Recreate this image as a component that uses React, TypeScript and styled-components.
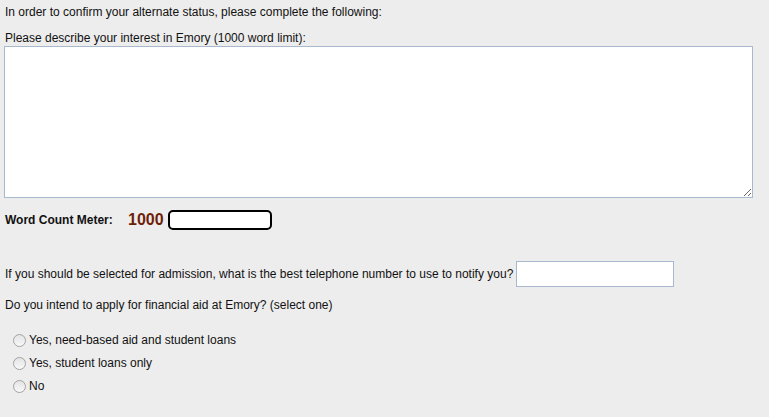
import { createGlobalStyle } from "styled-components";
import styled from "styled-components";

const GlobalStyle = createGlobalStyle`
  html, body {
    margin: 0;
    padding: 0;
    background: #ededed;
  }
  body {
    font-family: "Liberation Sans", Arial, sans-serif;
    font-size: 12px;
    color: #111;
  }
`;

const Page = styled.div`
  padding: 5px 4px 0 4px;
  display: flex;
  flex-direction: column;
`;

const Line = styled.div<{ $top?: number }>`
  line-height: 15px;
  padding-left: 1px;
  margin-top: ${(p) => p.$top ?? 0}px;
`;

const Essay = styled.textarea`
  box-sizing: border-box;
  width: 749px;
  height: 152px;
  margin: 0;
  border: 1px solid #a9b9cd;
  background: #fff;
  resize: both;
  font-family: inherit;
  font-size: 12px;
`;

const MeterRow = styled.div`
  display: flex;
  align-items: center;
  margin-top: 12px;
  height: 20px;
  padding-left: 1px;
`;

const MeterLabel = styled.span`
  font-weight: bold;
  width: 123px;
`;

const Count = styled.span`
  font-size: 16px;
  font-weight: bold;
  color: #6e1f0a;
  width: 40px;
`;

const Meter = styled.div`
  box-sizing: border-box;
  width: 104px;
  height: 20px;
  border: 2px solid #000;
  border-radius: 5px;
  background: #fff;
`;

const PhoneRow = styled.div`
  display: flex;
  align-items: center;
  margin-top: 31px;
  padding-left: 1px;
`;

const Phone = styled.input`
  box-sizing: border-box;
  width: 158px;
  height: 26px;
  margin: 0 0 0 3px;
  border: 1px solid #a9b9cd;
  background: #fff;
`;

const Options = styled.div`
  display: flex;
  flex-direction: column;
  gap: 8px;
  margin-top: 20px;
  padding-left: 9px;
`;

const Option = styled.label`
  display: flex;
  align-items: center;
  gap: 3px;
  line-height: 15px;
`;

const Radio = styled.span`
  box-sizing: border-box;
  width: 13px;
  height: 13px;
  border-radius: 50%;
  border: 1px solid #a3a3a3;
  background: linear-gradient(#e4e4e4, #f8f8f8);
`;

export default function App() {
  return (
    <>
      <GlobalStyle />
      <Page>
        <Line>In order to confirm your alternate status, please complete the following:</Line>
        <Line $top={11}>Please describe your interest in Emory (1000 word limit):</Line>
        <Essay />
        <MeterRow>
          <MeterLabel>Word Count Meter:</MeterLabel>
          <Count>1000</Count>
          <Meter />
        </MeterRow>
        <PhoneRow>
          If you should be selected for admission, what is the best telephone number to use to notify you?
          <Phone type="text" />
        </PhoneRow>
        <Line $top={11}>Do you intend to apply for financial aid at Emory? (select one)</Line>
        <Options>
          <Option><Radio />Yes, need-based aid and student loans</Option>
          <Option><Radio />Yes, student loans only</Option>
          <Option><Radio />No</Option>
        </Options>
      </Page>
    </>
  );
}
